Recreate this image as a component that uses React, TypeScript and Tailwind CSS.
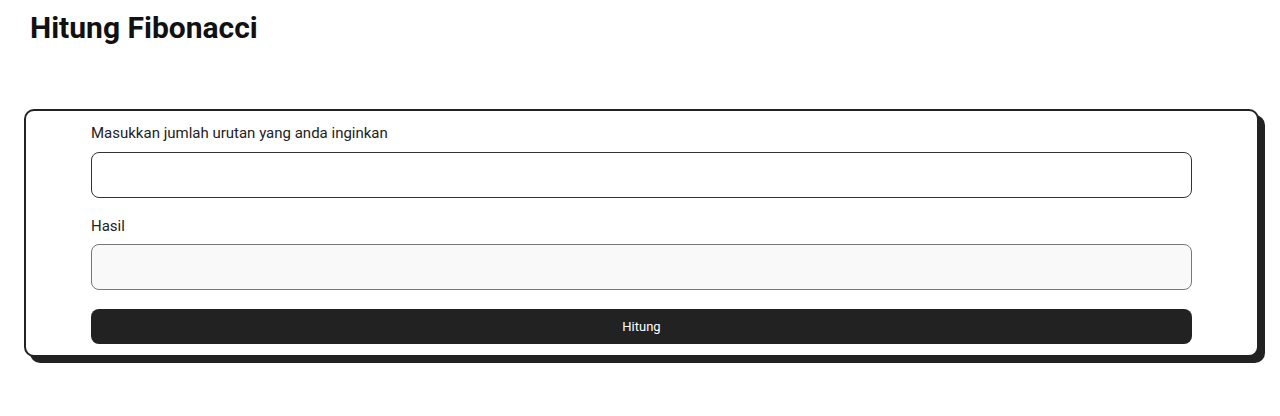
export default function App() {
  return (
    <div className="min-h-screen bg-white text-[#111]" style={{ fontFamily: "Roboto, 'Noto Sans', sans-serif" }}>
      <div className="pl-6 pr-[21px] pt-[10px]">
        <h1 className="pl-[6px] text-[30px] font-bold leading-[36px] text-[#111]">Hitung Fibonacci</h1>
        <div className="mt-[63px] rounded-[10px] border-2 border-[#222] bg-white px-[65px] pt-[12px] pb-[11px] shadow-[6px_6px_0_#222]">
          <label className="block text-[15px] leading-[20px] text-[#222]">Masukkan jumlah urutan yang anda inginkan</label>
          <input type="text" className="mt-[9px] block h-[46px] w-full rounded-[8px] border border-[#333] bg-white px-3 outline-none" />
          <label className="mt-[18px] block text-[15px] leading-[20px] text-[#222]">Hasil</label>
          <input type="text" readOnly className="mt-[8px] block h-[46px] w-full rounded-[8px] border border-[#777] bg-[#f9f9f9] px-3 outline-none" />
          <button className="mt-[19px] block h-[35px] w-full rounded-[8px] bg-[#222] text-[13px] text-white">Hitung</button>
        </div>
      </div>
    </div>
  );
}
